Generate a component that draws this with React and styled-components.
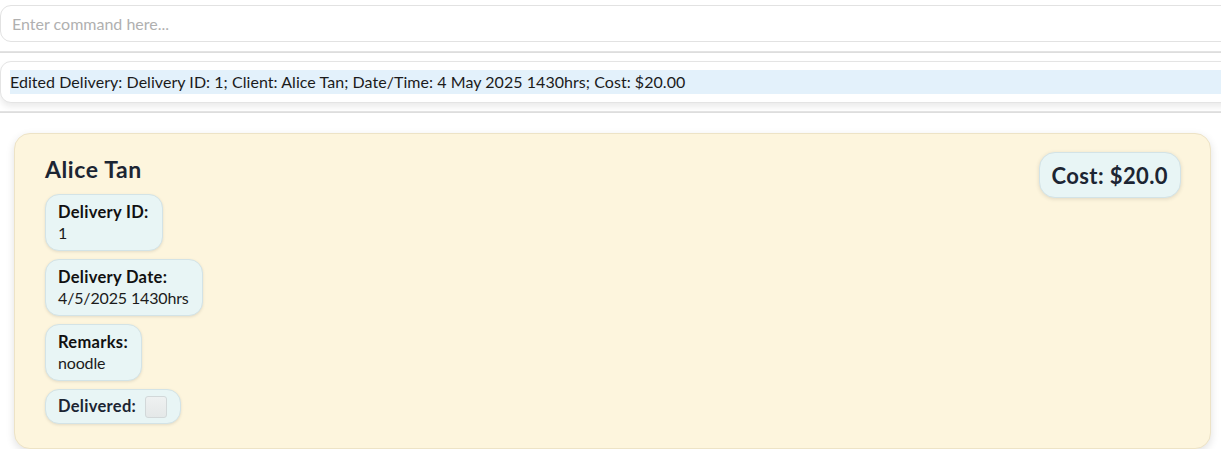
import React from 'react';
import styled, { createGlobalStyle } from 'styled-components';

const GlobalStyle = createGlobalStyle`
  html, body {
    margin: 0;
    padding: 0;
    background: #ffffff;
    overflow: hidden;
  }
  body {
    font-family: "Lato", "Open Sans", sans-serif;
    color: #1b1b1b;
  }
`;

const Page = styled.div`
  width: 1240px;
  padding-top: 5px;
`;

const CommandBox = styled.input`
  box-sizing: border-box;
  display: block;
  width: 100%;
  height: 37px;
  padding: 0 11px;
  border: 1px solid #e2e2e2;
  border-radius: 11px;
  font-family: inherit;
  font-size: 16px;
  color: #333;
  background: #fff;
  outline: none;

  &::placeholder {
    color: #b0b0b0;
  }
`;

const Splitter = styled.div`
  height: ${(p) => p.$h}px;
  margin-top: ${(p) => p.$top}px;
  background: linear-gradient(#e6e6e6, #dadada);
`;

const ResultBox = styled.div`
  box-sizing: border-box;
  margin-top: 8px;
  height: 42px;
  padding: 8px 0 0 9px;
  border: 1px solid #e4e4e4;
  border-radius: 11px;
  background: #fff;
  box-shadow: 0 4px 6px rgba(0, 0, 0, 0.08);
`;

const ResultText = styled.div`
  height: 24px;
  line-height: 24px;
  font-size: 16px;
  letter-spacing: 0.05px;
  background: #e3f1fb;
  color: #1b1b1b;
  white-space: nowrap;
`;

const ListArea = styled.div`
  padding: 20px 10px 0 14px;
`;

const Card = styled.div`
  box-sizing: border-box;
  width: 1197px;
  height: 316px;
  padding: 20px 29px 0 30px;
  display: flex;
  justify-content: space-between;
  align-items: flex-start;
  background: #fdf5dd;
  border: 1px solid #ede3c6;
  border-radius: 16px;
  box-shadow: 0 3px 8px rgba(0, 0, 0, 0.12);
`;

const Details = styled.div`
  display: flex;
  flex-direction: column;
  align-items: flex-start;
  gap: 8px;
`;

const Name = styled.h2`
  margin: 0 0 2px 0;
  font-size: 23px;
  font-weight: 700;
  line-height: 30px;
  letter-spacing: 0.6px;
  color: #1c2533;
`;

const Pill = styled.div`
  box-sizing: border-box;
  display: ${(p) => (p.$inline ? 'flex' : 'block')};
  align-items: center;
  gap: 9px;
  padding: ${(p) => (p.$inline ? '0 13px 0 12px' : '8px 13px 8px 12px')};
  height: ${(p) => (p.$inline ? '35px' : '57px')};
  background: #e8f5f5;
  border: 1px solid #d3e3e6;
  border-radius: 14px;
  box-shadow: 0 1px 3px rgba(0, 0, 0, 0.1);
  font-size: 16px;
  line-height: 19.5px;
`;

const Label = styled.div`
  font-size: 16.5px;
  font-weight: 700;
  letter-spacing: 0.3px;
  color: ${(p) => (p.$dark ? '#1c2533' : '#111')};
`;

const Value = styled.div`
  color: #1b1b1b;
  letter-spacing: -0.15px;
`;

const Check = styled.span`
  display: inline-block;
  width: 22px;
  height: 22px;
  box-sizing: border-box;
  border: 1px solid #d2d8d9;
  border-radius: 3px;
  background: linear-gradient(#eef1f1, #e4e8e8);
`;

const CostPill = styled.div`
  margin-top: -2px;
  padding: 0 12px;
  height: 46px;
  display: flex;
  align-items: center;
  box-sizing: border-box;
  background: #e8f5f5;
  border: 1px solid #d3e3e6;
  border-radius: 16px;
  box-shadow: 0 1px 4px rgba(0, 0, 0, 0.12);
  font-size: 22px;
  font-weight: 700;
  letter-spacing: 0.4px;
  color: #1c2533;
`;

const fields = [
  { label: 'Delivery ID:', value: '1' },
  { label: 'Delivery Date:', value: '4/5/2025 1430hrs' },
  { label: 'Remarks:', value: 'noodle' },
];

export default function App() {
  return (
    <>
      <GlobalStyle />
      <Page>
        <CommandBox placeholder="Enter command here..." />
        <Splitter $top={9} $h={2} />
        <ResultBox>
          <ResultText>
            Edited Delivery: Delivery ID: 1; Client: Alice Tan; Date/Time: 4 May 2025 1430hrs; Cost: $20.00
          </ResultText>
        </ResultBox>
        <Splitter $top={8} $h={2} />
        <ListArea>
          <Card>
            <Details>
              <Name>Alice Tan</Name>
              {fields.map((f) => (
                <Pill key={f.label}>
                  <Label>{f.label}</Label>
                  <Value>{f.value}</Value>
                </Pill>
              ))}
              <Pill $inline>
                <Label $dark>Delivered:</Label>
                <Check />
              </Pill>
            </Details>
            <CostPill>Cost: $20.0</CostPill>
          </Card>
        </ListArea>
      </Page>
    </>
  );
}
